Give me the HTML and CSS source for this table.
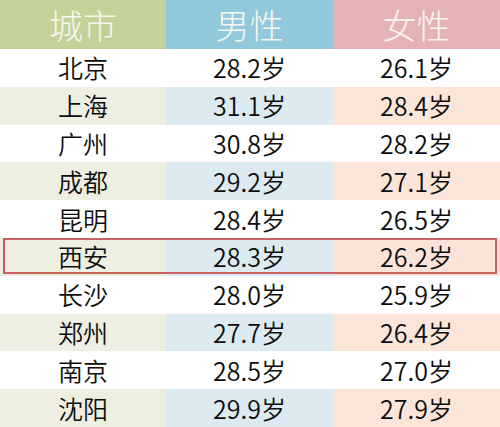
FILE: index.html
```html
<!DOCTYPE html>
<html lang="zh">
<head>
<meta charset="utf-8">
<link rel="stylesheet" href="styles.css">
</head>
<body>
<div class="table">
  <div class="row head">
    <div class="cell c1">城市</div>
    <div class="cell c2">男性</div>
    <div class="cell c3">女性</div>
  </div>
  <div class="row"><div class="cell">北京</div><div class="cell">28.2岁</div><div class="cell">26.1岁</div></div>
  <div class="row alt"><div class="cell">上海</div><div class="cell">31.1岁</div><div class="cell">28.4岁</div></div>
  <div class="row"><div class="cell">广州</div><div class="cell">30.8岁</div><div class="cell">28.2岁</div></div>
  <div class="row alt"><div class="cell">成都</div><div class="cell">29.2岁</div><div class="cell">27.1岁</div></div>
  <div class="row"><div class="cell">昆明</div><div class="cell">28.4岁</div><div class="cell">26.5岁</div></div>
  <div class="row alt mark"><div class="cell">西安</div><div class="cell">28.3岁</div><div class="cell">26.2岁</div></div>
  <div class="row"><div class="cell">长沙</div><div class="cell">28.0岁</div><div class="cell">25.9岁</div></div>
  <div class="row alt"><div class="cell">郑州</div><div class="cell">27.7岁</div><div class="cell">26.4岁</div></div>
  <div class="row"><div class="cell">南京</div><div class="cell">28.5岁</div><div class="cell">27.0岁</div></div>
  <div class="row alt"><div class="cell">沈阳</div><div class="cell">29.9岁</div><div class="cell">27.9岁</div></div>
</div>
</body>
</html>
```
FILE: styles.css
```css
html, body {
  margin: 0;
  padding: 0;
  background: #ffffff;
}
.table {
  width: 500px;
  height: 427px;
  display: grid;
  grid-template-rows: 49px repeat(10, 1fr);
  font-family: "Noto Sans CJK SC", "Noto Sans", sans-serif;
  font-weight: 350;
}
.row {
  display: grid;
  grid-template-columns: 166px 167px 167px;
  position: relative;
}
.cell {
  display: flex;
  align-items: center;
  justify-content: center;
  font-size: 25px;
  color: #0d0d0d;
  line-height: 1;
}
.head .cell {
  font-size: 34px;
  font-weight: 300;
  color: #f6f7ee;
}
.head .c1 { background: #c4d199; }
.head .c2 { background: #92c8dc; }
.head .c3 { background: #e5b3b5; }
.alt .cell:nth-child(1) { background: #eeeee1; }
.alt .cell:nth-child(2) { background: #dceaf1; }
.alt .cell:nth-child(3) { background: #fbe5d9; }
.mark .cell:nth-child(3) { background: #fce3d9; }
.mark::after {
  content: "";
  position: absolute;
  left: 3px;
  right: 3px;
  top: 0;
  bottom: 2px;
  border: 2px solid #c7625f;
  pointer-events: none;
}
```
